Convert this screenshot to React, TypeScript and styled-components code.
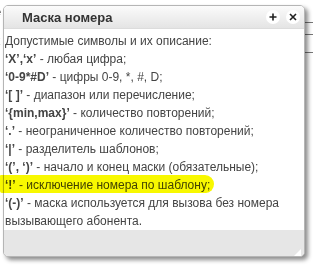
import React from "react";
import styled, { createGlobalStyle } from "styled-components";

const Global = createGlobalStyle`
  html, body { margin: 0; padding: 0; background: #fff; }
  body { font-family: "Liberation Sans", Arial, sans-serif; width: 313px; height: 267px; overflow: hidden; }
`;

const Page = styled.div`
  position: relative;
  width: 313px;
  height: 267px;
  overflow: hidden;
  background: #fff;
`;

const BgText = styled.div<{ $top: number }>`
  position: absolute;
  left: -6px;
  top: ${(p) => p.$top}px;
  font-size: 13px;
  color: #333;
`;

const BgLines = styled.div`
  position: absolute;
  right: 0;
  top: 0;
  width: 20px;
  display: flex;
  flex-direction: column;
`;

const BgLine = styled.div<{ $h: number }>`
  height: ${(p) => p.$h}px;
  border-bottom: 1px solid #777;
`;

const Dialog = styled.div`
  position: absolute;
  left: 3px;
  top: 5px;
  width: 300px;
  height: 250px;
  border: 1px solid #b5b5b5;
  border-radius: 5px;
  background: #fff;
  box-shadow: 3px 3px 4px rgba(0, 0, 0, 0.45);
  display: flex;
  flex-direction: column;
  overflow: hidden;
`;

const Header = styled.div`
  height: 22px;
  flex: none;
  display: flex;
  align-items: center;
  padding: 0 4px 0 18px;
  background: linear-gradient(#fbfbfb, #e4e4e4);
  border-bottom: 1px solid #dcdcdc;
`;

const Title = styled.div`
  flex: 1;
  font-size: 13px;
  font-weight: bold;
  color: #333;
  padding-top: 1px;
`;

const Btn = styled.div`
  width: 14px;
  height: 14px;
  border-radius: 50%;
  background: #fff;
  display: flex;
  align-items: center;
  justify-content: center;
  margin-left: 6px;
`;

const Body = styled.div`
  flex: 1;
  padding: 3px 4px 0 1px;
  font-size: 12px;
  line-height: 18px;
  color: #444;
`;

const Line = styled.div`
  white-space: nowrap;
`;

const Highlight = styled.div`
  position: absolute;
  left: 0;
  top: 175px;
  width: 214px;
  height: 18px;
  background: #f8f800;
  border-radius: 1px 9px 8px 2px / 1px 9px 9px 2px;
  mix-blend-mode: multiply;
  pointer-events: none;
`;

const Footer = styled.div`
  height: 29px;
  flex: none;
  background: #e6e6e6;
  display: flex;
  align-items: flex-end;
  justify-content: flex-end;
  padding: 0 3px 3px 0;
`;

const Grip = styled.div`
  width: 0;
  height: 0;
  border-left: 10px solid transparent;
  border-bottom: 10px solid #fff;
`;

const PlusIcon = () => (
  <svg width="8" height="8" viewBox="0 0 8 8">
    <path d="M4 0.5V7.5M0.5 4H7.5" stroke="#222" strokeWidth="1.6" />
  </svg>
);

const CloseIcon = () => (
  <svg width="8" height="8" viewBox="0 0 8 8">
    <path d="M1 1L7 7M7 1L1 7" stroke="#222" strokeWidth="1.6" />
  </svg>
);

export default function App() {
  return (
    <Page>
      <Global />
      <BgText $top={4}>е</BgText>
      <BgText $top={33}>х</BgText>
      <BgLines>
        <BgLine $h={22} />
        <BgLine $h={11} />
        <BgLine $h={17} />
      </BgLines>
      <Dialog>
        <Header>
          <Title>Маска номера</Title>
          <Btn>
            <PlusIcon />
          </Btn>
          <Btn>
            <CloseIcon />
          </Btn>
        </Header>
        <Body>
          <Line>Допустимые символы и их описание:</Line>
          <Line>
            <b>‘X’,‘x’</b> - любая цифра;
          </Line>
          <Line>
            <b>‘0-9*#D’</b> - цифры 0-9, *, #, D;
          </Line>
          <Line>
            <b>‘[ ]’</b> - диапазон или перечисление;
          </Line>
          <Line>
            <b>‘{"{"}min,max{"}"}’</b> - количество повторений;
          </Line>
          <Line>
            <b>‘.’</b> - неограниченное количество повторений;
          </Line>
          <Line>
            <b>‘|’</b> - разделитель шаблонов;
          </Line>
          <Line>
            <b>‘(’, ‘)’</b> - начало и конец маски (обязательные);
          </Line>
          <Line>
            <b>‘!’</b> - исключение номера по шаблону;
          </Line>
          <Line>
            <b>‘(-)’</b> - маска используется для вызова без номера
          </Line>
          <Line>вызывающего абонента.</Line>
        </Body>
        <Footer>
          <Grip />
        </Footer>
      </Dialog>
      <Highlight />
    </Page>
  );
}
